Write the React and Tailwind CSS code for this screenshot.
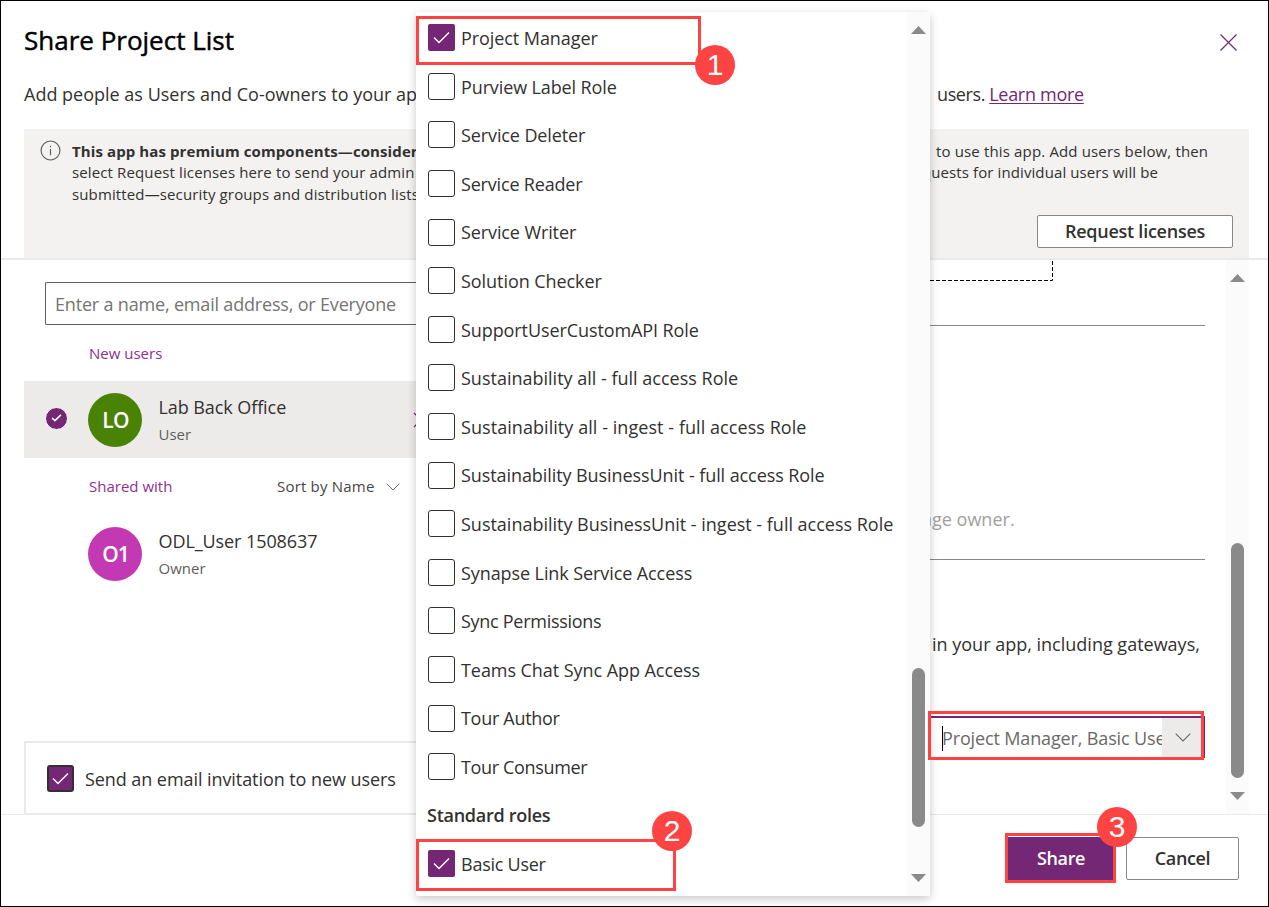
import React from "react";

const roles = [
  ["Project Manager", "tracking-[-0.07px]"],
  ["Purview Label Role", "tracking-[-0.12px]"],
  ["Service Deleter", "tracking-[-0.11px]"],
  ["Service Reader", "tracking-[-0.18px]"],
  ["Service Writer", "tracking-[-0.11px]"],
  ["Solution Checker", "tracking-[-0.06px]"],
  ["SupportUserCustomAPI Role", "tracking-[-0.09px]"],
  ["Sustainability all - full access Role", "tracking-[0px]"],
  ["Sustainability all - ingest - full access Role", "tracking-[0.06px]"],
  ["Sustainability BusinessUnit - full access Role", "tracking-[-0.08px]"],
  ["Sustainability BusinessUnit - ingest - full access Role", "tracking-[-0.01px]"],
  ["Synapse Link Service Access", "tracking-[-0.09px]"],
  ["Sync Permissions", "tracking-[-0.28px]"],
  ["Teams Chat Sync App Access", "tracking-[-0.06px]"],
  ["Tour Author", "tracking-[-0.3px]"],
  ["Tour Consumer", "tracking-[-0.34px]"],
];

function Check() {
  return (
    <svg viewBox="0 0 27 27" className="size-[27px]" fill="none" stroke="white" strokeWidth="1.4">
      <path d="M6 13.5l5 5L21 8.5" />
    </svg>
  );
}

function Chevron({ className }) {
  return (
    <svg viewBox="0 0 16 9" className={className} fill="none" stroke="currentColor" strokeWidth="1.1">
      <path d="M.7 .7L8 8 15.3 .7" />
    </svg>
  );
}

function Role({ name, tracking, checked }) {
  return (
    <div className="flex h-[48.6px] shrink-0 items-center gap-[6px] pl-3">
      {checked ? (
        <span className="size-[27px] rounded-[2px] bg-[#742774]">
          <Check />
        </span>
      ) : (
        <span className="size-[27px] rounded-[3px] border border-[#323130]" />
      )}
      <span className={"pt-[1.8px] text-[18px] whitespace-pre " + tracking}>{name}</span>
    </div>
  );
}

function Arrow({ down }) {
  return (
    <svg viewBox="0 0 15 8" className="h-2 w-[15px] shrink-0" fill="#8a8a8a">
      <path d={down ? "M0 0H15L7.5 8Z" : "M0 8H15L7.5 0Z"} />
    </svg>
  );
}

function Person({ initials, name, role, green, selected }) {
  return (
    <div className={selected ? "flex h-[77px] items-center bg-[#edebe9] pl-[21px]" : "flex h-[77px] items-center pl-[21px]"}>
      <div className="w-[43px]">
        {selected && (
          <span className="-mt-0.5 flex size-[23px] items-center justify-center rounded-full border-[1.5px] border-white bg-[#742774]">
            <svg viewBox="0 0 12 9" className="mb-0.5 h-2 w-[11px]" fill="none" stroke="white" strokeWidth="1.7">
              <path d="M1 4.5l3.2 3L11 1" />
            </svg>
          </span>
        )}
      </div>
      <span
        className={
          green
            ? "flex size-[54px] items-center justify-center rounded-full bg-[#498205] pt-[3px] pl-px text-[21px] font-semibold tracking-[-0.8px] text-white"
            : "flex size-[54px] items-center justify-center rounded-full bg-[#c239b3] pt-[3px] pl-px text-[21px] font-semibold tracking-[-1px] text-white"
        }
      >
        {initials}
      </span>
      <div className="ml-4 flex flex-1 flex-col pt-0.5 pl-[0.5px] whitespace-pre">
        <span className="h-[27px] text-[18px] leading-[27px] tracking-[-0.08px]">{name}</span>
        <span className="h-[27px] text-[15px] leading-[27px] text-[#605e5c]">{role}</span>
      </div>
      {selected && (
        <svg viewBox="0 0 16 16" className="mr-[-13px] size-4" fill="none" stroke="#742774" strokeWidth="1.2">
          <path d="M1 1l14 14M15 1L1 15" />
        </svg>
      )}
    </div>
  );
}

function Badge({ n, className }) {
  return (
    <span className={"absolute flex size-10 items-center justify-center rounded-full bg-[#fe4343] pb-px font-['Liberation_Sans',sans-serif] text-[30px] text-white " + className}>
      {n}
    </span>
  );
}

function Header() {
  return (
    <header className="h-[257px] shrink-0 pr-[19px] pl-[23px]">
      <div className="flex h-[79px] items-center justify-between pr-[12px]">
        <h1 className="text-[26px] text-black [-webkit-text-stroke:0.45px_black]">Share Project List</h1>
        <svg viewBox="0 0 17 17" className="mt-[3px] size-[17px]" fill="none" stroke="#742774" strokeWidth="1.2">
          <path d="M.5 .5l16 16M16.5 .5l-16 16" />
        </svg>
      </div>
      <p className="flex h-[29px] items-center text-[18px] whitespace-pre">
        <span className="w-[913px]">Add people as Users and Co-owners to your app</span>
        <span className="tracking-[-0.4px]">users. </span>
        <a className="tracking-[-0.3px] text-[#742774] underline underline-offset-2">Learn more</a>
      </p>
      <section className="mt-5 flex h-[129px] flex-col bg-[#f3f2f1] pt-[11px] pl-4">
        <div className="flex">
          <svg viewBox="0 0 22 22" className="size-[21px]" fill="none" stroke="#605e5c" strokeWidth="1.2">
            <circle cx="11" cy="11" r="9.9" />
            <path d="M11 9.3V16M11 6v1.6" />
          </svg>
          <div className="ml-[11px] h-[65px] pt-[0.8px] text-[15px] leading-[21.6px] tracking-[0.13px] whitespace-pre">
            <p className="flex">
              <b className="w-[864px] font-bold tracking-[0.1px]">This app has premium components—consider</b>
              <span className="tracking-[0.15px]">to use this app. Add users below, then</span>
            </p>
            <p className="flex">
              <span className="w-[850px]">select Request licenses here to send your admin</span>
              <span className="tracking-[0.1px]">quests for individual users will be</span>
            </p>
            <p>submitted—security groups and distribution lists</p>
          </div>
        </div>
        <button className="mt-[10px] mr-4 h-[33px] w-[196px] self-end rounded-[2px] border border-[#8a8886] bg-white text-[18px] font-semibold tracking-[-0.25px]">
          Request licenses
        </button>
      </section>
    </header>
  );
}

function People() {
  return (
    <div className="flex w-[415px] shrink-0 flex-col pl-[23px]">
      <div className="mt-[22px] ml-[21px] flex h-[43px] items-center rounded-l-[2px] border border-r-0 border-[#605e5c] pt-0.5 pl-[9px] text-[18px] tracking-[-0.18px] whitespace-pre text-[#767472]">
        Enter a name, email address, or Everyone
      </div>
      <div className="mt-[14px] h-[28px] pl-[65px] text-[15px] leading-[28px] text-[#8f3092]">New users</div>
      <div className="mt-[14px]">
        <Person initials="LO" name="Lab Back Office" role="User" green selected />
      </div>
      <div className="flex h-[57px] items-center pl-[65px] text-[15px]">
        <span className="w-[188px] text-[#8f3092]">Shared with</span>
        <span className="tracking-[0.2px] text-[#484644]">Sort by Name</span>
        <Chevron className="ml-[11px] h-2 w-[14px] text-[#605e5c]" />
      </div>
      <Person initials="O1" name="ODL_User 1508637" role="Owner" />
      <div className="mt-auto -mb-px flex h-[74px] items-center border-2 border-r-0 border-[#eaeaea] pl-[21px]">
        <span className="size-[27px] rounded-[3px] border-2 border-[#323130] bg-[#742774]">
          <span className="-m-0.5 block">
            <Check />
          </span>
        </span>
        <span className="ml-[11px] pt-0.5 text-[18px] tracking-[-0.07px] whitespace-pre">Send an email invitation to new users</span>
      </div>
    </div>
  );
}

function Settings() {
  return (
    <div className="flex flex-1 pl-[514px]">
      <div className="flex w-[275px] shrink-0 flex-col text-[18px] whitespace-pre">
        <svg viewBox="0 0 123 21" className="h-[21px] w-[123px]" fill="none" stroke="black" strokeDasharray="4 2">
          <path d="M0 20.5H122.5V0" />
        </svg>
        <div className="h-[45px] border-b border-[#8a8886]" />
        <div className="flex h-[234px] items-end border-b border-[#8a8886] pb-[26px] text-[#a19f9d]">
          <span className="-ml-[9px]">nge owner.</span>
        </div>
        <div className="mt-[70px] h-[29px] pl-0.5 leading-[29px]">in your app, including gateways,</div>
        <div className="mt-[57px] flex h-[42px] border-t-2 border-r-2 border-[#742774] text-[#6b6967]">
          <span className="flex w-[232px] items-center overflow-hidden pl-[12px] tracking-[-0.14px]">
            <span className="h-[25px] w-px shrink-0 bg-black" />
            <span className="-ml-px pt-px">Project Manager, Basic User</span>
          </span>
          <span className="flex flex-1 items-center justify-center bg-[#edebe9]">
            <Chevron className="mb-0.5 h-[9px] w-4" />
          </span>
        </div>
      </div>
      <div className="ml-[21px] flex w-[23px] flex-col items-center bg-[#fbfbfb] pt-[14px] pb-[14px]">
        <Arrow />
        <span className="mt-[261px] h-[235px] w-[13px] rounded-full bg-[#8a8a8a]" />
        <span className="flex-1" />
        <Arrow down />
      </div>
    </div>
  );
}

function RoleMenu() {
  return (
    <div className="absolute top-3 left-[416px] flex h-[884px] w-[514px] rounded-[2px] bg-white shadow-[0_3px_10px_rgba(0,0,0,0.22)]">
      <div className="flex flex-1 flex-col pt-[1.4px]">
        {roles.map(([name, tracking], i) => (
          <Role key={name} name={name} tracking={tracking} checked={i === 0} />
        ))}
        <div className="flex h-[48.6px] items-center pt-px pl-[11px] text-[18px] font-semibold tracking-[-0.27px]">Standard roles</div>
        <Role name="Basic User" tracking="tracking-[-0.25px]" checked />
      </div>
      <div className="flex w-[23px] flex-col items-center bg-[#fbfbfb] pt-[14px] pb-[14px]">
        <Arrow />
        <span className="mt-[634px] h-[159px] w-[13px] rounded-full bg-[#8a8a8a]" />
        <span className="flex-1" />
        <Arrow down />
      </div>
    </div>
  );
}

export default function App() {
  return (
    <div className="relative flex h-[907px] w-[1269px] flex-col overflow-hidden border border-black bg-white font-['Open_Sans',sans-serif] text-[#323130]">
      <Header />
      <main className="flex h-[556px] shrink-0 border-t-2 border-[#eaeaea]">
        <People />
        <Settings />
      </main>
      <footer className="flex flex-1 items-start justify-end gap-[11px] border-t border-[#eaeaea] pt-[22px] pr-[29px] text-[18px] font-semibold tracking-[-0.35px]">
        <button className="h-[43px] w-[108px] bg-[#742774] pb-px text-white">Share</button>
        <button className="h-[43px] w-[113px] rounded-[2px] border border-[#8a8886] bg-white">Cancel</button>
      </footer>
      <div className="absolute -inset-px">
        <RoleMenu />
        <div className="absolute top-4 left-[416px] h-[49px] w-[285px] border-3 border-[#fe4343]" />
        <div className="absolute top-[839px] left-[416px] h-[52px] w-[260px] border-3 border-[#fe4343]" />
        <div className="absolute top-[711px] left-[928px] h-[49px] w-[276px] border-3 border-[#fe4343]" />
        <div className="absolute top-[833px] left-[1005px] h-[50px] w-[111px] border-3 border-[#fe4343]" />
        <Badge n="1" className="top-[45px] left-[695px]" />
        <Badge n="2" className="top-[811px] left-[652px]" />
        <Badge n="3" className="top-[807px] left-[1097px]" />
      </div>
    </div>
  );
}
